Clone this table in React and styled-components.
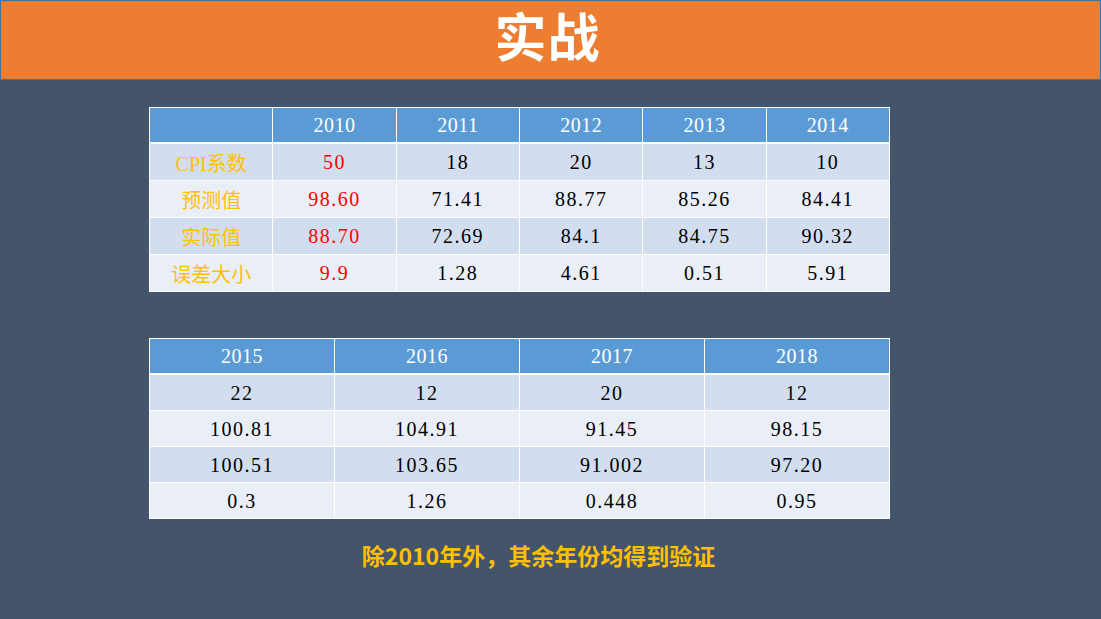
import React from 'react'
import styled, { createGlobalStyle } from 'styled-components'

const first = {
  years: ['2010', '2011', '2012', '2013', '2014'],
  rows: [
    { label: 'CPI系数', values: ['50', '18', '20', '13', '10'] },
    { label: '预测值', values: ['98.60', '71.41', '88.77', '85.26', '84.41'] },
    { label: '实际值', values: ['88.70', '72.69', '84.1', '84.75', '90.32'] },
    { label: '误差大小', values: ['9.9', '1.28', '4.61', '0.51', '5.91'] },
  ],
}

const second = {
  years: ['2015', '2016', '2017', '2018'],
  rows: [
    ['22', '12', '20', '12'],
    ['100.81', '104.91', '91.45', '98.15'],
    ['100.51', '103.65', '91.002', '97.20'],
    ['0.3', '1.26', '0.448', '0.95'],
  ],
}

export default function App() {
  return (
    <>
      <GlobalStyle />
      <Slide>
        <TitleBar>
          <Title>实战</Title>
        </TitleBar>
        <Content>
          <Table cols={6} rowHeight={36}>
            <Head />
            {first.years.map((y) => (
              <Head key={y}>{y}</Head>
            ))}
            {first.rows.map((row, r) => (
              <React.Fragment key={row.label}>
                <Cell shade={r % 2 === 0} tone="label">
                  {row.label}
                </Cell>
                {row.values.map((v, c) => (
                  <Cell key={c} shade={r % 2 === 0} tone={c === 0 ? 'red' : 'plain'}>
                    {v}
                  </Cell>
                ))}
              </React.Fragment>
            ))}
          </Table>

          <Table cols={4} rowHeight={35} $gapTop={46}>
            {second.years.map((y) => (
              <Head key={y}>{y}</Head>
            ))}
            {second.rows.map((row, r) =>
              row.map((v, c) => (
                <Cell key={`${r}-${c}`} shade={r % 2 === 0} tone="plain">
                  {v}
                </Cell>
              ))
            )}
          </Table>
        </Content>
        <Note>除2010年外，其余年份均得到验证</Note>
      </Slide>
    </>
  )
}

const GlobalStyle = createGlobalStyle`
  html, body {
    margin: 0;
    padding: 0;
    background: #44546a;
  }
`

const Slide = styled.div`
  width: 1101px;
  height: 619px;
  background: #44546a;
  overflow: hidden;
  font-family: "Liberation Serif", "Noto Sans CJK SC", serif;
`

const TitleBar = styled.header`
  box-sizing: border-box;
  height: 80px;
  background: #ed7d31;
  border: 1px solid #41719c;
  display: flex;
  align-items: center;
  justify-content: center;
  padding: 0 6px 12px 0;
`

const Title = styled.h1`
  margin: 0;
  color: #ffffff;
  font-family: "Noto Sans CJK SC", sans-serif;
  font-weight: 700;
  font-size: 52px;
  line-height: normal;
  letter-spacing: 1px;
`

const Content = styled.main`
  padding: 27px 0 0 149px;
`

const Table = styled.div`
  box-sizing: border-box;
  width: 741px;
  margin-top: ${(p) => p.$gapTop || 0}px;
  display: grid;
  grid-template-columns: repeat(${(p) => p.cols}, 1fr);
  grid-template-rows: 35px repeat(4, ${(p) => p.rowHeight}px);
  gap: 1px;
  background: #ffffff;
  border: 1px solid #ffffff;
`

const Head = styled.div`
  background: #5b9bd5;
  color: #ffffff;
  margin-bottom: 1px;
  display: flex;
  align-items: center;
  justify-content: center;
  font-size: 20px;
  letter-spacing: 0.5px;
`

const toneColor = {
  label: '#ffc000',
  red: '#ff0000',
  plain: '#000000',
}

const Cell = styled.div`
  background: ${(p) => (p.shade ? '#d2deef' : '#eaeff7')};
  color: ${(p) => toneColor[p.tone]};
  display: flex;
  align-items: center;
  justify-content: center;
  font-size: 20px;
  letter-spacing: ${(p) => (p.tone === 'label' ? 0 : 1.5)}px;
  padding-top: 1px;
`

const Note = styled.p`
  margin: 21px 0 0 0;
  width: 1077px;
  text-align: center;
  color: #ffc000;
  font-family: "Noto Sans CJK SC", sans-serif;
  font-weight: 700;
  font-size: 23px;
  line-height: 30px;
`
